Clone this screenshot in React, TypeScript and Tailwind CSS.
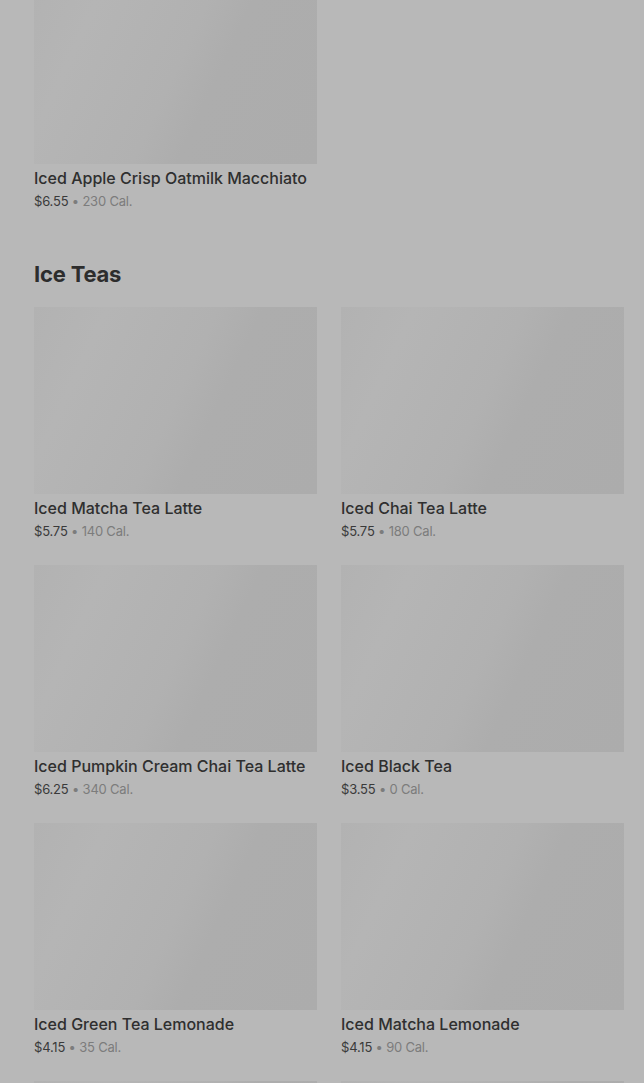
import React from "react";

type Item = { name: string; price: string; cal: string };

const teas: Item[] = [
  { name: "Iced Matcha Tea Latte", price: "$5.75", cal: "140 Cal." },
  { name: "Iced Chai Tea Latte", price: "$5.75", cal: "180 Cal." },
  { name: "Iced Pumpkin Cream Chai Tea Latte", price: "$6.25", cal: "340 Cal." },
  { name: "Iced Black Tea", price: "$3.55", cal: "0 Cal." },
  { name: "Iced Green Tea Lemonade", price: "$4.15", cal: "35 Cal." },
  { name: "Iced Matcha Lemonade", price: "$4.15", cal: "90 Cal." },
];

function Img() {
  return (
    <div className="h-[187px] w-full bg-[linear-gradient(115deg,#b2b2b2_0%,#b5b5b5_20%,#b1b1b1_50%,#adadad_62%,#acacac_100%)]" />
  );
}

function Card({ item }: { item: Item }) {
  return (
    <div className="flex flex-col">
      <Img />
      <div className="mt-[4px] text-[16px] leading-[20px] font-medium text-[#2f2f2f] whitespace-nowrap">
        {item.name}
      </div>
      <div className="mt-[4px] text-[13px] leading-[18px] tracking-[-0.2px] text-[#3a3a3a]">
        {item.price}
        <span className="text-[#7c7c7c]"> • {item.cal}</span>
      </div>
    </div>
  );
}

export default function App() {
  return (
    <div
      className="h-[1083px] overflow-hidden bg-[#b8b8b8]"
      style={{ fontFamily: "Inter, 'Noto Sans', sans-serif" }}
    >
      <div className="-mt-[23px] pl-[34px] pr-[20px]">
        <div className="grid grid-cols-2 gap-x-[24px]">
          <Card item={{ name: "Iced Apple Crisp Oatmilk Macchiato", price: "$6.55", cal: "230 Cal." }} />
        </div>
        <h2 className="mt-[48px] text-[22px] leading-[32px] font-bold tracking-[-0.2px] text-[#2d2d2d]">
          Ice Teas
        </h2>
        <div className="mt-[17px] grid grid-cols-2 gap-x-[24px] gap-y-[25px]">
          {teas.map((t) => (
            <Card key={t.name} item={t} />
          ))}
          <Img />
          <Img />
        </div>
      </div>
    </div>
  );
}
